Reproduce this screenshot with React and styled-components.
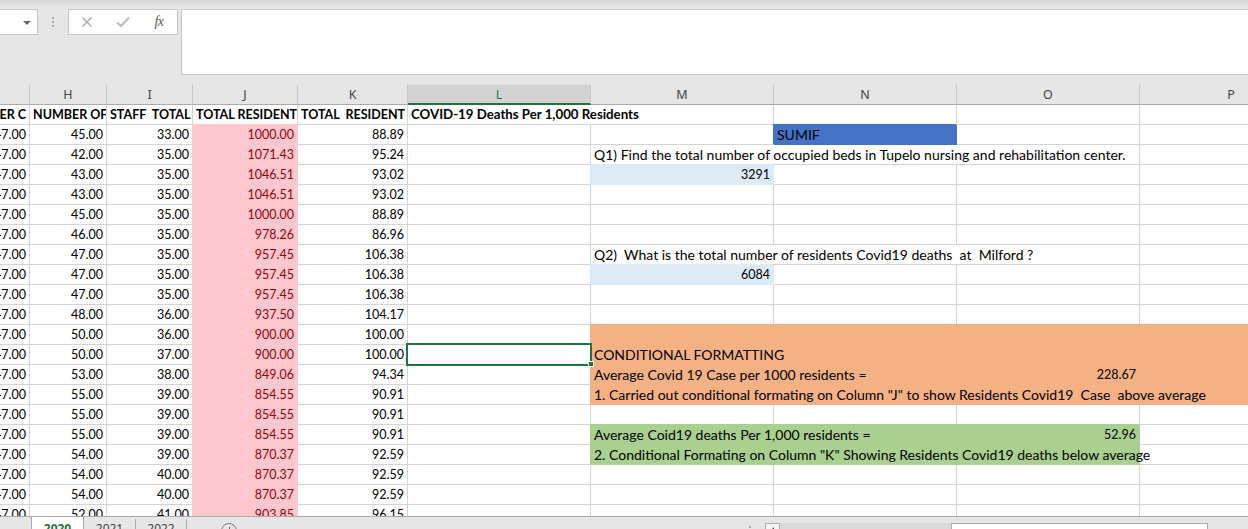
import React from 'react';
import styled, { createGlobalStyle, css } from 'styled-components';

const GlobalStyle = createGlobalStyle`
  html, body { margin: 0; padding: 0; background: #fff; overflow: hidden; }
  #root { width: 1248px; height: 529px; }
`;

const COLS = [30, 77, 86, 105, 110, 183, 183, 183, 183, 183];
const TEMPLATE = COLS.map((c) => `${c}px`).join(' ');
const GRID = '#d4d4d4';
const CELL_FONT = 'Lato, "Liberation Sans", sans-serif';

const Frame = styled.div`
  width: 1248px;
  height: 529px;
  overflow: hidden;
  display: flex;
  flex-direction: column;
  background: #fff;
`;

/* ---------- top formula area ---------- */
const TopBar = styled.div`
  flex: none;
  height: 85px;
  box-sizing: border-box;
  padding-top: 9px;
  display: flex;
  align-items: flex-start;
  background: linear-gradient(#d4d4d4 0, #e6e6e6 7px, #e6e6e6 100%);
`;

const NameBox = styled.div`
  width: 38px;
  height: 26px;
  box-sizing: border-box;
  background: #fff;
  border: 1px solid #c6c6c6;
  border-left: none;
  display: flex;
  align-items: center;
  justify-content: flex-end;
  padding-right: 6px;
`;

const Caret = styled.span`
  width: 0;
  height: 0;
  border-left: 4px solid transparent;
  border-right: 4px solid transparent;
  border-top: 4px solid #6a6a6a;
  margin-top: 1px;
`;

const Grip = styled.div`
  margin: 8px 0 0 14px;
  width: 2px;
  display: flex;
  flex-direction: column;
  gap: 2px;
  span {
    width: 2px;
    height: 2px;
    background: #a8a8a8;
  }
`;

const FxGroup = styled.div`
  margin-left: 14px;
  width: 110px;
  height: 26px;
  box-sizing: border-box;
  background: #fff;
  border: 1px solid #c6c6c6;
  display: grid;
  grid-template-columns: repeat(3, 36px);
  align-items: center;
  justify-items: center;
`;

const FxLabel = styled.span`
  font-family: "Liberation Serif", serif;
  font-style: italic;
  font-size: 14px;
  color: #5a5a5a;
  letter-spacing: -0.5px;
  line-height: 1;
`;

const FormulaInput = styled.div`
  margin-left: 3px;
  flex: 1;
  height: 66px;
  box-sizing: border-box;
  background: #fff;
  border: 1px solid #c6c6c6;
  border-right: none;
`;

/* ---------- column headers ---------- */
const HeaderRow = styled.div`
  flex: none;
  display: grid;
  grid-template-columns: ${TEMPLATE};
  height: 20px;
  background: #e6e6e6;
`;

const ColHead = styled.div`
  box-sizing: border-box;
  height: 20px;
  border-right: 1px solid #c8c8c8;
  border-bottom: 1px solid #ababab;
  display: flex;
  align-items: center;
  justify-content: center;
  font-family: "Noto Sans", "Open Sans", sans-serif;
  font-size: 12.5px;
  color: #444;
  ${(p) =>
    p.$active &&
    css`
      background: #d2d2d2;
      color: #217346;
      border-bottom: 2px solid #217346;
    `}
`;

/* ---------- sheet body ---------- */
const Body = styled.div`
  flex: 1;
  overflow: hidden;
  display: flex;
  flex-direction: column;
`;

const Row = styled.div`
  flex: none;
  display: grid;
  grid-template-columns: ${TEMPLATE};
  height: 20px;
`;

const fontSize = (p) => {
  if (p.$caps) return '12.5px';
  if (p.$bold) return '13.25px';
  if (p.$num) return '12.5px';
  return '14px';
};

const Cell = styled.div`
  position: relative;
  grid-column: span ${(p) => p.$span || 1};
  box-sizing: border-box;
  height: 20px;
  border-right: 1px solid ${(p) => p.$fill || GRID};
  border-bottom: 1px solid ${(p) => p.$fill || GRID};
  background: ${(p) => p.$fill || 'transparent'};
  box-shadow: ${(p) => (p.$fill ? `-1px -1px 0 0 ${p.$fill}` : 'none')};
  padding: 0 3px;
  font-family: ${CELL_FONT};
  font-size: ${fontSize};
  line-height: 19px;
  color: ${(p) => p.$color || '#000'};
  font-weight: ${(p) => (p.$bold || p.$caps ? 700 : 400)};
  text-align: ${(p) => p.$align || 'left'};
  white-space: pre;
  overflow: ${(p) => (p.$clip ? 'hidden' : 'visible')};
  ${(p) =>
    p.$clipLeft &&
    css`
      direction: rtl;
    `}
`;

const Selection = styled.div`
  position: absolute;
  left: -2px;
  top: -2px;
  width: 186px;
  height: 23px;
  box-sizing: border-box;
  border: 2px solid #217346;
  pointer-events: none;
  z-index: 2;
`;

const FillHandle = styled.div`
  position: absolute;
  right: -4px;
  bottom: -3px;
  width: 6px;
  height: 6px;
  box-sizing: border-box;
  background: #217346;
  border: 1px solid #fff;
`;

/* ---------- sheet tab bar ---------- */
const SheetBar = styled.div`
  flex: none;
  height: 13px;
  box-sizing: border-box;
  border-top: 1px solid #ababab;
  background: #e6e6e6;
  display: flex;
  align-items: flex-start;
  overflow: hidden;
`;

const NavPad = styled.div`
  width: 31px;
  flex: none;
`;

const Tab = styled.div`
  flex: none;
  width: ${(p) => p.$w}px;
  height: 16px;
  box-sizing: border-box;
  display: flex;
  justify-content: center;
  padding-top: 5px;
  font-family: "Noto Sans", "Open Sans", sans-serif;
  font-size: 12px;
  line-height: 14px;
  color: #444;
  border-right: 1px solid #ababab;
  ${(p) =>
    p.$active
      ? css`
          margin-top: -1px;
          height: 17px;
          padding-top: 6px;
          background: #fff;
          color: #217346;
          font-weight: 700;
          border-left: 1px solid #ababab;
        `
      : css`
          margin-top: 2px;
          padding-top: 3px;
        `}
`;

const AddSheet = styled.div`
  flex: none;
  margin: 6px 0 0 34px;
  width: 16px;
  height: 16px;
  box-sizing: border-box;
  border: 1px solid #7a7a7a;
  border-radius: 50%;
  display: flex;
  justify-content: center;
  padding-top: 3px;
  &::before {
    content: '';
    width: 1px;
    height: 9px;
    background: #6a6a6a;
  }
`;

const SplitDot = styled.div`
  flex: none;
  margin: 9px 0 0 512px;
  width: 2px;
  height: 2px;
  background: #a8a8a8;
`;

const ScrollBtn = styled.div`
  flex: none;
  margin: 6px 0 0 14px;
  width: 15px;
  height: 12px;
  box-sizing: border-box;
  background: #f4f4f4;
  border: 1px solid #ababab;
  display: flex;
  justify-content: center;
  padding-top: 3px;
  &::before {
    content: '';
    width: 0;
    height: 0;
    border-top: 3px solid transparent;
    border-bottom: 3px solid transparent;
    border-right: 3px solid #555;
  }
`;

const Track = styled.div`
  flex: none;
  margin-top: 6px;
  width: 171px;
  height: 12px;
  background: #dadada;
`;

const Thumb = styled.div`
  flex: none;
  margin-top: 6px;
  width: 257px;
  height: 12px;
  box-sizing: border-box;
  background: #fff;
  border: 1px solid #ababab;
`;

/* ---------- data ---------- */
const DATA = [
  ['45.00', '33.00', '1000.00', '88.89'],
  ['42.00', '35.00', '1071.43', '95.24'],
  ['43.00', '35.00', '1046.51', '93.02'],
  ['43.00', '35.00', '1046.51', '93.02'],
  ['45.00', '35.00', '1000.00', '88.89'],
  ['46.00', '35.00', '978.26', '86.96'],
  ['47.00', '35.00', '957.45', '106.38'],
  ['47.00', '35.00', '957.45', '106.38'],
  ['47.00', '35.00', '957.45', '106.38'],
  ['48.00', '36.00', '937.50', '104.17'],
  ['50.00', '36.00', '900.00', '100.00'],
  ['50.00', '37.00', '900.00', '100.00'],
  ['53.00', '38.00', '849.06', '94.34'],
  ['55.00', '39.00', '854.55', '90.91'],
  ['55.00', '39.00', '854.55', '90.91'],
  ['55.00', '39.00', '854.55', '90.91'],
  ['54.00', '39.00', '870.37', '92.59'],
  ['54.00', '40.00', '870.37', '92.59'],
  ['54.00', '40.00', '870.37', '92.59'],
  ['52.00', '41.00', '903.85', '96.15'],
];

const BLUE = '#4472c4';
const LIGHT = '#ddebf7';
const ORANGE = '#f4b183';
const GREEN = '#a9d08e';

// Cells for columns M..P, per data row
const RIGHT = {
  0: [{}, { text: 'SUMIF', fill: BLUE }, {}, {}],
  1: [
    { span: 3, text: 'Q1) Find the total number of occupied beds in Tupelo nursing and rehabilitation center.' },
    {},
  ],
  2: [{ text: '3291', fill: LIGHT, align: 'right', num: true }, {}, {}, {}],
  6: [
    { span: 3, text: 'Q2)  What is the total number of residents Covid19 deaths  at  Milford ?' },
    {},
  ],
  7: [{ text: '6084', fill: LIGHT, align: 'right', num: true }, {}, {}, {}],
  10: [{ span: 4, fill: ORANGE }],
  11: [{ span: 4, fill: ORANGE, text: 'CONDITIONAL FORMATTING' }],
  12: [
    { span: 2, fill: ORANGE, text: 'Average Covid 19 Case per 1000 residents =' },
    { fill: ORANGE, text: '228.67', align: 'right', num: true },
    { fill: ORANGE },
  ],
  13: [
    {
      span: 4,
      fill: ORANGE,
      text: '1. Carried out conditional formating on Column "J" to show Residents Covid19  Case  above average',
    },
  ],
  15: [
    { span: 2, fill: GREEN, text: 'Average Coid19 deaths Per 1,000 residents =' },
    { fill: GREEN, text: '52.96', align: 'right', num: true },
    {},
  ],
  16: [
    {
      span: 3,
      fill: GREEN,
      text: '2. Conditional Formating on Column "K" Showing Residents Covid19 deaths below average',
    },
    {},
  ],
};

const EMPTY_RIGHT = [{}, {}, {}, {}];
const HEAD_LETTERS = ['', 'H', 'I', 'J', 'K', 'L', 'M', 'N', 'O', 'P'];

function CloseIcon() {
  return (
    <svg width="12" height="12" viewBox="0 0 12 12">
      <path d="M1.5 1.5 L10.5 10.5 M10.5 1.5 L1.5 10.5" stroke="#a6a6a6" strokeWidth="1.3" fill="none" />
    </svg>
  );
}

function CheckIcon() {
  return (
    <svg width="14" height="12" viewBox="0 0 14 12">
      <path d="M1 6.5 L5 10 L13 1.5" stroke="#bdbdbd" strokeWidth="2.2" fill="none" />
    </svg>
  );
}

export default function App() {
  return (
    <>
      <GlobalStyle />
      <Frame>
        <TopBar>
          <NameBox>
            <Caret />
          </NameBox>
          <Grip>
            <span />
            <span />
            <span />
          </Grip>
          <FxGroup>
            <CloseIcon />
            <CheckIcon />
            <FxLabel>fx</FxLabel>
          </FxGroup>
          <FormulaInput />
        </TopBar>

        <HeaderRow>
          {HEAD_LETTERS.map((l, i) => (
            <ColHead key={i} $active={l === 'L'}>
              {l}
            </ColHead>
          ))}
        </HeaderRow>

        <Body>
          <Row>
            <Cell $caps $clip $clipLeft>
              NUMBER OF LEAVER C
            </Cell>
            <Cell $caps $clip>NUMBER OF RESIDENTS</Cell>
            <Cell $caps $clip>STAFF  TOTAL</Cell>
            <Cell $caps $clip>TOTAL RESIDENT</Cell>
            <Cell $caps $clip>TOTAL  RESIDENT</Cell>
            <Cell $bold $span={2}>COVID-19 Deaths Per 1,000 Residents</Cell>
            <Cell />
            <Cell />
            <Cell />
          </Row>
          {DATA.map((r, i) => {
            const right = RIGHT[i] || EMPTY_RIGHT;
            return (
              <Row key={i}>
                <Cell $num $align="right" $clip $clipLeft>
                  47.00
                </Cell>
                <Cell $num $align="right">{r[0]}</Cell>
                <Cell $num $align="right">{r[1]}</Cell>
                <Cell $num $align="right" $fill="#ffc7ce" $color="#9c0006">
                  {r[2]}
                </Cell>
                <Cell $num $align="right">{r[3]}</Cell>
                <Cell>
                  {i === 11 && (
                    <Selection>
                      <FillHandle />
                    </Selection>
                  )}
                </Cell>
                {right.map((c, j) => (
                  <Cell key={j} $span={c.span} $fill={c.fill} $align={c.align} $num={c.num}>
                    {c.text}
                  </Cell>
                ))}
              </Row>
            );
          })}
        </Body>

        <SheetBar>
          <NavPad />
          <Tab $active $w={53}>2020</Tab>
          <Tab $w={52}>2021</Tab>
          <Tab $w={51}>2022</Tab>
          <AddSheet />
          <SplitDot />
          <ScrollBtn />
          <Track />
          <Thumb />
        </SheetBar>
      </Frame>
    </>
  );
}
